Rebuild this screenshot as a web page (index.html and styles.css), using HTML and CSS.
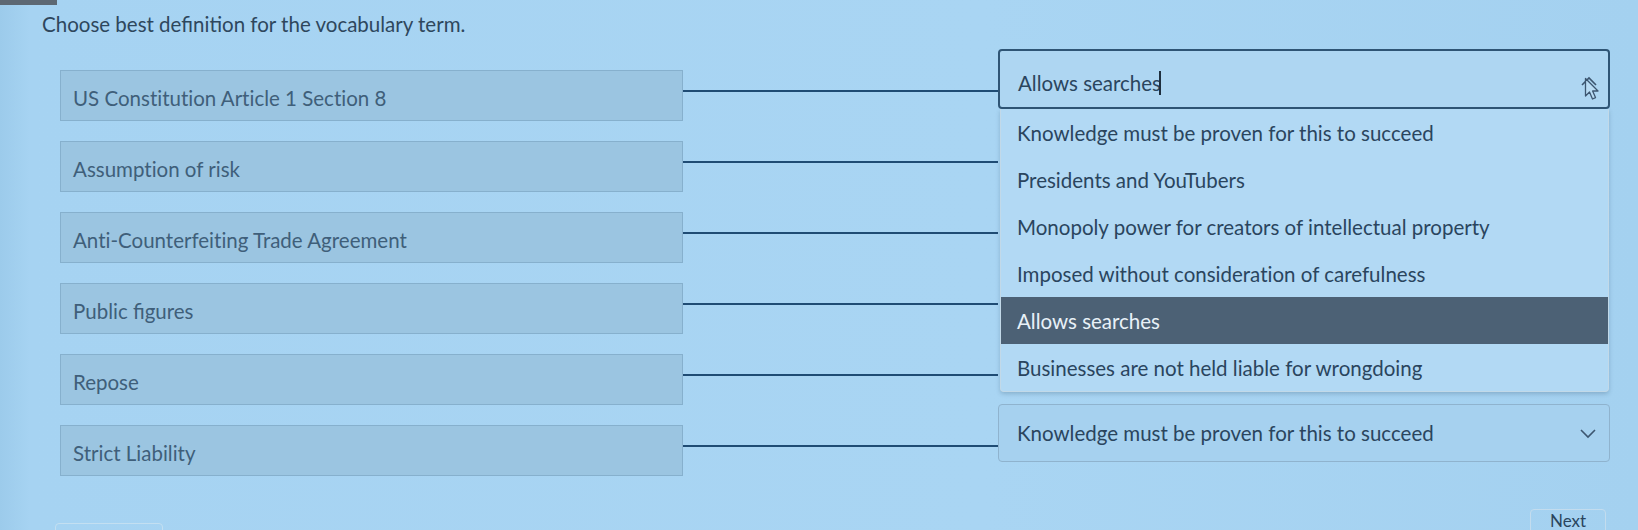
FILE: index.html
```html
<!DOCTYPE html>
<html lang="en">
<head>
<meta charset="utf-8">
<title>Matching</title>
<link rel="stylesheet" href="styles.css">
</head>
<body>
<div class="topbar"></div>
<main class="page">
  <p class="prompt">Choose best definition for the vocabulary term.</p>
  <div class="rows">
    <div class="row">
      <div class="term">US Constitution Article 1 Section 8</div>
      <div class="link"></div>
      <div class="answer">
        <div class="select open">
          <span class="value">Allows searches<span class="caret-cursor"></span></span>
          <svg class="chev" width="18" height="12" viewBox="0 0 18 12"><path d="M2 10 L9 3 L16 10" fill="none" stroke="#3d5670" stroke-width="1.6"/></svg>
          <svg class="pointer" width="16" height="24" viewBox="0 0 16 24"><path d="M1.5 1.5 L1.5 19 L5.5 15 L8.5 22 L11.5 20.6 L8.6 14 L14 14 Z" fill="#b9dcf4" stroke="#3d5670" stroke-width="1.3" stroke-linejoin="round"/></svg>
        </div>
        <ul class="menu">
          <li>Knowledge must be proven for this to succeed</li>
          <li>Presidents and YouTubers</li>
          <li>Monopoly power for creators of intellectual property</li>
          <li>Imposed without consideration of carefulness</li>
          <li class="active">Allows searches</li>
          <li>Businesses are not held liable for wrongdoing</li>
        </ul>
      </div>
    </div>
    <div class="row">
      <div class="term">Assumption of risk</div>
      <div class="link"></div>
      <div class="answer"></div>
    </div>
    <div class="row">
      <div class="term">Anti-Counterfeiting Trade Agreement</div>
      <div class="link"></div>
      <div class="answer"></div>
    </div>
    <div class="row">
      <div class="term liga">Public figures</div>
      <div class="link"></div>
      <div class="answer"></div>
    </div>
    <div class="row">
      <div class="term">Repose</div>
      <div class="link"></div>
      <div class="answer"></div>
    </div>
    <div class="row">
      <div class="term">Strict Liability</div>
      <div class="link"></div>
      <div class="answer">
        <div class="select">
          <span class="value">Knowledge must be proven for this to succeed</span>
          <svg class="chev" width="18" height="12" viewBox="0 0 18 12"><path d="M2 3 L9 10 L16 3" fill="none" stroke="#3d5670" stroke-width="1.6"/></svg>
        </div>
      </div>
    </div>
  </div>
  <div class="footer">
    <div class="ghost-btn"></div>
    <div class="next-btn">Next</div>
  </div>
</main>
</body>
</html>
```

FILE: styles.css
```css
* { box-sizing: border-box; }
html, body { margin: 0; height: 100%; overflow: hidden; }
body {
  background: linear-gradient(90deg, #9ccbeb 0px, #a6d3f2 30px, #a9d5f3 60%, #a4d1f0 100%);
  font-family: Lato, "Open Sans", sans-serif;
  color: #2c4760;
  position: relative;
}
.topbar {
  position: absolute;
  left: 0; top: 0;
  width: 57px; height: 5px;
  background: #5d6873;
}
.page {
  padding: 0 0 0 60px;
}
.prompt {
  margin: 0 0 0 -18px;
  padding-top: 11px;
  font-size: 20.5px;
  line-height: 26px;
  color: #2e475d;
}
.rows {
  margin-top: 12px;
  display: flex;
  flex-direction: column;
  gap: 3px;
}
.row {
  display: flex;
  align-items: flex-start;
  height: 68px;
}
.term {
  margin-top: 21px;
  width: 623px;
  height: 51px;
  background: #9bc5e1;
  border: 1px solid #86b0cd;
  display: flex;
  align-items: center;
  padding: 4px 0 0 12px;
  font-size: 20.5px;
  color: #3f5f7a;
  font-variant-ligatures: no-common-ligatures;
}
.term.liga { font-variant-ligatures: common-ligatures; }
.link {
  margin-top: 41px;
  width: 315px;
  height: 2px;
  background: #1f4c74;
}
.answer {
  width: 612px;
  position: relative;
}
.select {
  height: 58px;
  border: 1px solid #8fb3ce;
  border-radius: 4px;
  background: #a6d1ef;
  display: flex;
  align-items: center;
  padding: 0 18px;
  position: relative;
  font-size: 20.5px;
  color: #2a455e;
}
.select .value { flex: 1; display: flex; align-items: center; }
.select.open {
  height: 60px;
  border: 2px solid #2f5575;
  background: #aed6f2;
  align-items: flex-start;
  padding-top: 20px;
}
.caret-cursor {
  display: inline-block;
  width: 1.5px;
  height: 24px;
  background: #1f2f3e;
  margin-left: -2px;
}
.chev { flex: none; margin-right: -6px; }
.select.open .chev { margin-top: 4px; margin-right: -8px; }
.pointer {
  position: absolute;
  right: 8px;
  top: 26px;
}
.menu {
  position: absolute;
  left: 2px; top: 60px;
  width: 609px;
  margin: 0; padding: 0;
  list-style: none;
  background: #b2d9f4;
  border: 1px solid #c2d9e8;
  border-top: none;
  border-radius: 0 0 4px 4px;
  box-shadow: 0 2px 4px rgba(40, 70, 100, 0.25);
  z-index: 2;
}
.menu li {
  height: 47px;
  display: flex;
  align-items: center;
  padding: 0 16px;
  font-size: 20.5px;
  color: #2a455e;
  font-variant-ligatures: no-common-ligatures;
}
.menu li.active {
  background: #4c6175;
  color: #e8f1f8;
}
.footer {
  display: flex;
  justify-content: space-between;
  padding-right: 32px;
  margin-top: 37px;
}
.ghost-btn {
  margin-top: 14px;
  margin-left: -5px;
  width: 108px;
  height: 30px;
  border: 1px solid #c3dff1;
  border-radius: 4px;
}
.next-btn {
  width: 76px;
  height: 40px;
  border: 1px solid #c3dcee;
  border-radius: 4px;
  padding-top: 2px;
  text-align: center;
  font-size: 17px;
  line-height: 18px;
  color: #2a455e;
}
```
